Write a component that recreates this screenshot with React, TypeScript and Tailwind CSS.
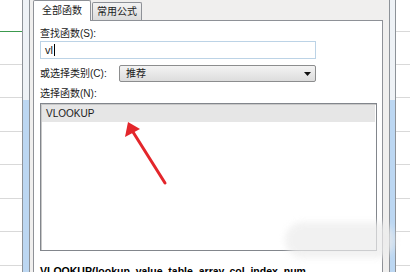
const rows = [32, 33, 33, 34, 33, 34, 33, 34];

function Sheet({ w, green }: { w: string; green?: boolean }) {
  return (
    <div className={`${w} shrink-0 flex flex-col bg-white`}>
      {rows.map((h, i) => (
        <div
          key={i}
          style={{ height: h }}
          className={`shrink-0 border-b ${i === 0 && green ? "border-[#3c9a4e]" : "border-[#d9d9d9]"}`}
        />
      ))}
    </div>
  );
}

function Frame({ w }: { w: string }) {
  return (
    <div className={`${w} shrink-0 flex flex-col border-x border-[#8d9298]`}>
      <div className="h-[100px] bg-[#eef2f6]" />
      <div className="flex-1 bg-[#bcd7f2]" />
    </div>
  );
}

export default function App() {
  return (
    <div
      className="relative w-[410px] h-[272px] overflow-hidden flex text-[10px] text-[#1b1b1b]"
      style={{ fontFamily: '"Liberation Sans", "Noto Sans CJK SC", sans-serif' }}
    >
      <Sheet w="w-[22px]" green />
      <Frame w="w-[8px]" />

      {/* dialog body */}
      <div className="w-[359px] shrink-0 bg-[#f0efee] pl-[3px] pr-[6px] flex flex-col">
        {/* tabs */}
        <div className="h-[23px] flex items-end relative z-10">
          <div className="w-[58px] h-[21px] bg-white border border-b-0 border-[#8e9197] rounded-t-[2px] flex items-center justify-center -mb-px pb-[2px]">
            全部函数
          </div>
          <div className="w-[50px] h-[18px] ml-px bg-gradient-to-b from-[#f3f3f3] to-[#dcdcdc] border border-b-0 border-[#8e9197] rounded-t-[2px] flex items-center justify-center">
            常用公式
          </div>
        </div>

        {/* tab page */}
        <div className="flex-1 bg-white border border-b-0 border-[#8e9197] pl-[6px] flex flex-col">
          <div className="mt-[5px] h-[15px] leading-[15px]">查找函数(S):</div>
          <div className="w-[276px] h-[18px] border border-[#bcd3e6] flex items-center pl-[4px] text-[11px]">
            <span>vl</span>
            <span className="w-px h-[12px] bg-black ml-px" />
          </div>

          <div className="mt-[6px] h-[17px] flex items-center">
            <div className="w-[79px]">或选择类别(C):</div>
            <div className="w-[197px] h-[17px] border border-[#8c8d8e] rounded-[2px] bg-gradient-to-b from-[#f3f3f3] to-[#dddddd] flex items-center justify-between pl-[6px] pr-[4px]">
              <span>推荐</span>
              <svg width="7" height="4" viewBox="0 0 7 4">
                <path d="M0 0h7L3.5 4z" fill="#111" />
              </svg>
            </div>
          </div>

          <div className="mt-[4px] h-[16px] leading-[16px]">选择函数(N):</div>
          <div className="mt-px w-[337px] h-[148px] border border-[#82868c] shadow-[inset_1px_1px_0_#c8c8c8] p-px">
            <div className="h-[17px] bg-[#e6e6e6] flex items-center pl-[4px]">VLOOKUP</div>
          </div>

          <div className="mt-[13px] w-[300px] leading-[15px] font-bold text-[10.5px] text-black">
            VLOOKUP(lookup_value, table_array, col_index_num, range_lookup)
          </div>
        </div>
      </div>

      <Frame w="w-[7px]" />
      <Sheet w="flex-1" />

      {/* red arrow annotation */}
      <svg className="absolute left-0 top-0 pointer-events-none" width="410" height="272">
        <line x1="165" y1="183" x2="133" y2="132" stroke="#e3262b" strokeWidth="3" strokeLinecap="round" />
        <path d="M128 122 L125 137 L140 129 Z" fill="#e3262b" />
      </svg>

      {/* faded watermark */}
      <div className="absolute left-[285px] top-[222px] w-[110px] h-[36px] rounded-[18px] bg-[#ececec] opacity-70 blur-[3px] pointer-events-none" />
    </div>
  );
}
